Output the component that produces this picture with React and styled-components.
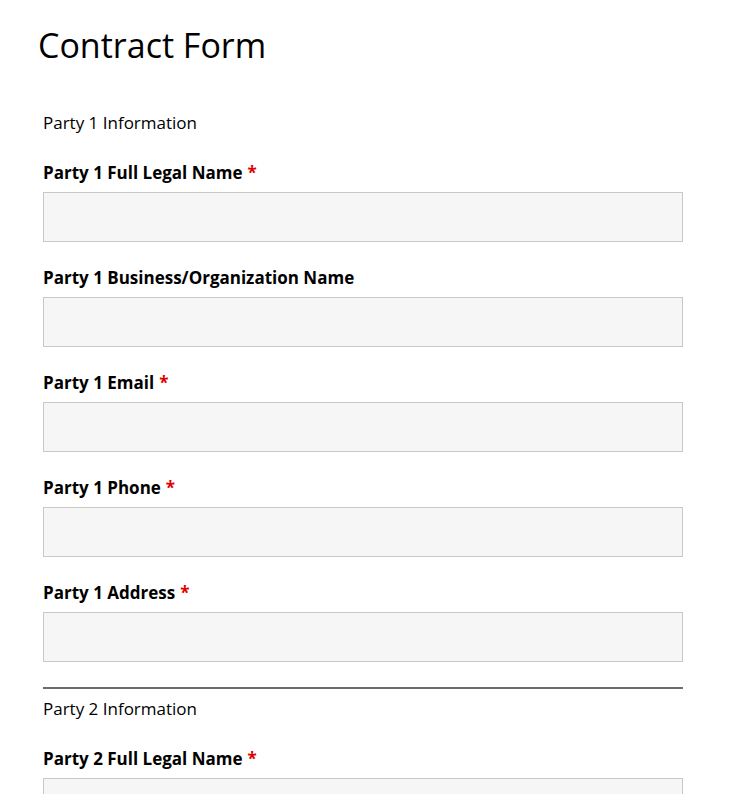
import styled, { createGlobalStyle } from "styled-components"

const GlobalStyle = createGlobalStyle`
  body {
    margin: 0;
    background: #fff;
    font-family: "Open Sans", "Noto Sans", sans-serif;
    color: #000;
  }
`

const parties = [
  {
    title: "Party 1 Information",
    fields: [
      { label: "Party 1 Full Legal Name", required: true },
      { label: "Party 1 Business/Organization Name" },
      { label: "Party 1 Email", required: true },
      { label: "Party 1 Phone", required: true },
      { label: "Party 1 Address", required: true },
    ],
  },
  {
    title: "Party 2 Information",
    fields: [{ label: "Party 2 Full Legal Name", required: true }],
  },
]

const App = () => {
  return (
    <Page>
      <GlobalStyle />
      <Title>Contract Form</Title>
      <Form>
        {parties.map((party, i) => (
          <Section key={party.title} $divided={i > 0}>
            <SectionTitle>{party.title}</SectionTitle>
            {party.fields.map((field) => (
              <Field key={field.label}>
                <Label>
                  {field.label}
                  {field.required && <Required>*</Required>}
                </Label>
                <Input type="text" />
              </Field>
            ))}
          </Section>
        ))}
      </Form>
    </Page>
  )
}

export default App

const Page = styled.div`
  padding: 25px 0 0 38px;
`

const Title = styled.h1`
  margin: 0 0 47px;
  font-size: 34px;
  line-height: 40px;
  font-weight: 400;
`

const Form = styled.form`
  margin-left: 5px;
  width: 640px;
`

const Section = styled.div`
  border-top: ${(p) => (p.$divided ? "2px solid #6b6b6b" : "none")};
  padding-top: ${(p) => (p.$divided ? "9px" : "0")};
`

const SectionTitle = styled.div`
  font-size: 17px;
  line-height: 22px;
  margin-bottom: 28px;
`

const Field = styled.div`
  display: flex;
  flex-direction: column;
  margin-bottom: 25px;
`

const Label = styled.label`
  font-size: 17px;
  line-height: 22px;
  font-weight: 700;
  margin-bottom: 8px;
`

const Required = styled.span`
  color: #e00000;
  margin-left: 5px;
`

const Input = styled.input`
  box-sizing: border-box;
  height: 50px;
  width: 100%;
  border: 1px solid #c8c8c8;
  background: #f6f6f6;
  font: inherit;
  padding: 0 10px;
  outline: none;
`
